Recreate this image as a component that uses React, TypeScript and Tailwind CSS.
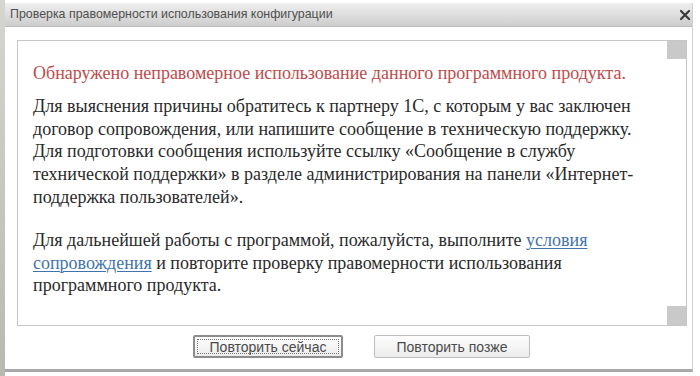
import React from "react";

const Link = ({children}: {children: React.ReactNode}) => (
	<span className="text-[#3f73ad] underline underline-offset-2 decoration-1">{children}</span>
);

const Button = ({label, focused}: {label: string; focused?: boolean}) => (
	<button
		className={`h-[23px] rounded-[2px] bg-gradient-to-b from-[#fdfdfd] to-[#ececec] p-[2px] text-[14px] leading-none text-[#4a4a4a] ${
			focused ? "w-[150px] border-2 border-[#8c8c8c]" : "w-[156px] border border-[#bdbdbd]"
		}`}
		style={{fontFamily: '"Liberation Sans", Arial, sans-serif'}}
	>
		<span
			className={`flex h-full w-full items-center justify-center ${
				focused ? "border border-dotted border-[#777]" : ""
			}`}
		>
			{label}
		</span>
	</button>
);

const App = () => {
	return (
		<div className="flex h-[376px] w-[700px] overflow-hidden bg-white">
			<div className="w-[5px] shrink-0 bg-gradient-to-b from-[#d6d6d0] to-[#b9b9b1]" />
			<div className="flex w-[688px] shrink-0 flex-col">
				<div className="mt-[3px] flex h-[369px] flex-col border-r border-b-[3px] border-r-[#d0d0d0] border-b-[#a9a9a9] bg-white">
					{/* заголовок окна */}
					<div
						className="flex h-[24px] shrink-0 items-center justify-between border-b border-[#bcbcbc] bg-gradient-to-b from-[#efefef] to-[#cdcdcd] pl-[5px] pr-[1px]"
						style={{fontFamily: '"Liberation Sans", Arial, sans-serif'}}
					>
						<span className="text-[12.4px] text-[#505050]">
							Проверка правомерности использования конфигурации
						</span>
						<svg width="12" height="12" viewBox="0 0 12 12">
							<path d="M2 2 L10 10 M10 2 L2 10" stroke="#3a3a3a" strokeWidth="2.2" strokeLinecap="round" />
						</svg>
					</div>

					{/* текст */}
					<div className="ml-[12px] mt-[13px] flex h-[286px] w-[670px] shrink-0 border border-[#c6c6c6]">
						<div
							className="flex-1 whitespace-nowrap pl-[15px] pt-[21px] text-[18px] leading-[22.8px] text-[#2a2a2a]"
							style={{fontFamily: '"Liberation Serif", "Times New Roman", serif'}}
						>
							<p className="text-[#bf4a4a]">
								Обнаружено неправомерное использование данного программного продукта.
							</p>
							<p className="mt-[10px]">
								Для выяснения причины обратитесь к партнеру 1С, с которым у вас заключен
								<br />
								договор сопровождения, или напишите сообщение в техническую поддержку.
								<br />
								Для подготовки сообщения используйте ссылку «Сообщение в службу
								<br />
								технической поддержки» в разделе администрирования на панели «Интернет-
								<br />
								поддержка пользователей».
							</p>
							<p className="mt-[20px]">
								Для дальнейшей работы с программой, пожалуйста, выполните <Link>условия</Link>
								<br />
								<Link>сопровождения</Link> и повторите проверку правомерности использования
								<br />
								программного продукта.
							</p>
						</div>
						<div className="flex w-[19px] shrink-0 flex-col justify-between">
							<div className="h-[18px] bg-[#c9c9c9]" />
							<div className="h-[19px] bg-[#c9c9c9]" />
						</div>
					</div>

					{/* кнопки */}
					<div className="ml-[188px] mt-[9px] flex gap-[31px]">
						<Button label="Повторить сейчас" focused />
						<Button label="Повторить позже" />
					</div>
				</div>
			</div>
		</div>
	);
};

export default App;
